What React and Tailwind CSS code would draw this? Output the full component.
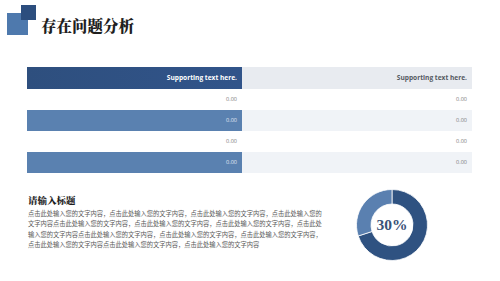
import React from "react";

const rows = [
  { blue: false },
  { blue: true },
  { blue: false },
  { blue: true },
];

const lines = [
  "点击此处输入您的文字内容，点击此处输入您的文字内容，点击此处输入您的文字内容，点击此处输入您的",
  "文字内容点击此处输入您的文字内容，点击此处输入您的文字内容，点击此处输入您的文字内容，点击此处",
  "输入您的文字内容点击此处输入您的文字内容，点击此处输入您的文字内容，点击此处输入您的文字内容，",
  "点击此处输入您的文字内容点击此处输入您的文字内容，点击此处输入您的文字内容",
];

function Donut() {
  const cx = 36, cy = 36, R = 35.5, r = 21;
  const a = (108 * Math.PI) / 180;
  const ex = cx - R * Math.sin(a), ey = cy - R * Math.cos(a);
  const ix = cx - r * Math.sin(a), iy = cy - r * Math.cos(a);
  const light = `M ${cx} ${cy - R} A ${R} ${R} 0 0 0 ${ex} ${ey} L ${ix} ${iy} A ${r} ${r} 0 0 1 ${cx} ${cy - r} Z`;
  const dark = `M ${cx} ${cy - R} A ${R} ${R} 0 1 1 ${ex} ${ey} L ${ix} ${iy} A ${r} ${r} 0 1 0 ${cx} ${cy - r} Z`;
  return (
    <svg width="72" height="72" viewBox="0 0 72 72">
      <path d={dark} fill="#2f5281" stroke="#ffffff" strokeWidth="0.8" />
      <path d={light} fill="#5a80b0" stroke="#ffffff" strokeWidth="0.8" />
    </svg>
  );
}

export default function App() {
  return (
    <div className="w-[500px] h-[281px] bg-white overflow-hidden flex flex-col" style={{ fontFamily: '"Noto Sans CJK SC", sans-serif' }}>
      {/* Header */}
      <div className="flex items-center pl-[7px] pt-[3px] h-[36px]">
        <svg width="29" height="30" viewBox="0 0 29 30" className="shrink-0">
          <rect x="0" y="8" width="21" height="22" fill="#4e79ad" />
          <rect x="14" y="0" width="15" height="15" fill="#2c4e7e" />
        </svg>
        <div className="ml-[5px] mt-[10px] text-[15.5px] leading-[20px] font-black text-[#1f1f1f]" style={{ fontFamily: '"Noto Serif CJK SC", "Noto Sans CJK SC", serif' }}>
          存在问题分析
        </div>
      </div>

      {/* Table */}
      <div className="ml-[27px] mt-[31px] w-[445px] grid grid-cols-[215px_230px]" style={{ fontFamily: '"Open Sans", "Liberation Sans", sans-serif' }}>
        <div className="h-[22px] bg-gradient-to-r from-[#2e4f7e] to-[#31548a] flex items-center justify-end pr-[5px] text-[6.6px] font-bold text-white">
          Supporting text here.
        </div>
        <div className="h-[22px] bg-[#e8ebf0] flex items-center justify-end pr-[5px] text-[6.6px] font-bold text-[#555a62]">
          Supporting text here.
        </div>
        {rows.map((row, i) => (
          <React.Fragment key={i}>
            <div className={`h-[21px] flex items-center justify-end pr-[5px] text-[5.5px] ${row.blue ? "bg-[#5a81b0] text-[#e3ebf5]" : "bg-white text-[#777777]"}`}>
              0.00
            </div>
            <div className={`h-[21px] flex items-center justify-end pr-[5px] text-[5.5px] text-[#777777] ${row.blue ? "bg-[#f0f3f7]" : "bg-white"}`}>
              0.00
            </div>
          </React.Fragment>
        ))}
      </div>

      {/* Bottom */}
      <div className="flex mt-[16px]">
        <div className="ml-[28px] w-[310px] pt-[5px]">
          <div className="text-[9.5px] leading-[12px] font-black text-[#1f1f1f]" style={{ fontFamily: '"Noto Serif CJK SC", "Noto Sans CJK SC", serif' }}>请输入标题</div>
          <div className="mt-[3px] text-[6.25px] leading-[10.4px] text-[#5a5a5a]">
            {lines.map((l, i) => (
              <div key={i} className="whitespace-nowrap">{l}</div>
            ))}
          </div>
        </div>
        <div className="ml-[18px] relative w-[72px] h-[72px]">
          <Donut />
          <div className="absolute inset-0 flex items-center justify-center text-[15.5px] font-bold text-[#3a5277]" style={{ fontFamily: '"Liberation Serif", "DejaVu Serif", serif' }}>
            30%
          </div>
        </div>
      </div>
    </div>
  );
}
